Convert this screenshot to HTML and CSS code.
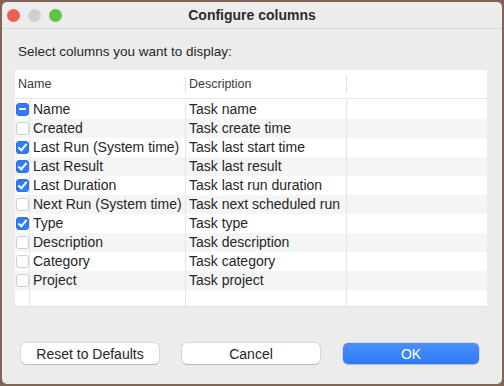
FILE: index.html
```html
<!DOCTYPE html>
<html lang="en">
<head>
  <meta charset="UTF-8" />
  <title>Configure columns</title>
  <link rel="stylesheet" href="styles.css">
</head>
<body>

  <div class="window">
    <!-- Title bar -->
    <div class="titlebar">
      <div class="lights">
        <span class="light red"></span>
        <span class="light gray"></span>
        <span class="light green"></span>
      </div>
      <div class="title">Configure columns</div>
      <div></div>
    </div>

    <div class="content">
      <p class="hint">Select columns you want to display:</p>

      <div class="table">
        <div class="row head">
          <div class="cell name-head">Name</div>
          <div class="cell desc">Description</div>
          <div class="cell last"></div>
        </div>

        <div class="row">
          <div class="cell check"><span class="box mixed"></span></div>
          <div class="cell name">Name</div>
          <div class="cell desc">Task name</div>
          <div class="cell last"></div>
        </div>
        <div class="row alt">
          <div class="cell check"><span class="box"></span></div>
          <div class="cell name">Created</div>
          <div class="cell desc">Task create time</div>
          <div class="cell last"></div>
        </div>
        <div class="row">
          <div class="cell check"><span class="box on"></span></div>
          <div class="cell name">Last Run (System time)</div>
          <div class="cell desc">Task last start time</div>
          <div class="cell last"></div>
        </div>
        <div class="row alt">
          <div class="cell check"><span class="box on"></span></div>
          <div class="cell name">Last Result</div>
          <div class="cell desc">Task last result</div>
          <div class="cell last"></div>
        </div>
        <div class="row">
          <div class="cell check"><span class="box on"></span></div>
          <div class="cell name">Last Duration</div>
          <div class="cell desc">Task last run duration</div>
          <div class="cell last"></div>
        </div>
        <div class="row alt">
          <div class="cell check"><span class="box"></span></div>
          <div class="cell name">Next Run (System time)</div>
          <div class="cell desc">Task next scheduled run</div>
          <div class="cell last"></div>
        </div>
        <div class="row">
          <div class="cell check"><span class="box on"></span></div>
          <div class="cell name">Type</div>
          <div class="cell desc">Task type</div>
          <div class="cell last"></div>
        </div>
        <div class="row alt">
          <div class="cell check"><span class="box"></span></div>
          <div class="cell name">Description</div>
          <div class="cell desc">Task description</div>
          <div class="cell last"></div>
        </div>
        <div class="row">
          <div class="cell check"><span class="box"></span></div>
          <div class="cell name">Category</div>
          <div class="cell desc">Task category</div>
          <div class="cell last"></div>
        </div>
        <div class="row alt">
          <div class="cell check"><span class="box"></span></div>
          <div class="cell name">Project</div>
          <div class="cell desc">Task project</div>
          <div class="cell last"></div>
        </div>
        <div class="row filler">
          <div class="cell check"></div>
          <div class="cell name"></div>
          <div class="cell desc"></div>
          <div class="cell last"></div>
        </div>
      </div>

      <div class="buttons">
        <button class="btn" type="button">Reset to Defaults</button>
        <button class="btn" type="button">Cancel</button>
        <button class="btn primary" type="button">OK</button>
      </div>
    </div>
  </div>

</body>
</html>
```

FILE: styles.css
```css
body {
  margin: 0;
  background-color: #7f6556;
  font-family: 'Liberation Sans', Arial, sans-serif;
  font-size: 14px;
  color: #262626;
}
.window {
  margin: 2px;
  height: 382px;
  background-color: #ececec;
  border-radius: 5px;
  overflow: hidden;
}
.titlebar {
  height: 26px;
  border-bottom: 1px solid #d9d9d9;
  display: grid;
  grid-template-columns: 1fr auto 1fr;
  align-items: center;
  padding: 0 5px;
}
.lights {
  display: flex;
  gap: 8px;
}
.light {
  width: 13px;
  height: 13px;
  border-radius: 50%;
}
.red { background-color: #ed5f57; }
.gray { background-color: #d0d0d0; }
.green { background-color: #5ec544; }
.title {
  font-weight: bold;
  font-size: 14px;
  color: #2b2b2b;
}
.content {
  padding: 0 15px 0 13px;
}
.hint {
  margin: 15px 0 11px 3px;
  line-height: 15px;
  font-size: 13.5px;
}
.table {
  background-color: #fff;
  width: 472px;
  height: 236px;
  border-bottom: 1px solid #e2e2e2;
}
.row {
  display: grid;
  grid-template-columns: 15px 156px 161px 1fr;
  height: 19px;
  line-height: 19px;
}
.row.alt {
  background-color: #f4f5f5;
}
.row.filler {
  height: 17px;
}
.cell {
  border-right: 1px solid #e4e4e4;
  padding-left: 3px;
  white-space: nowrap;
  overflow: hidden;
}
.cell.last {
  border-right: none;
}
.cell.check {
  padding-left: 1px;
  display: flex;
  align-items: center;
}
.row.head {
  grid-template-columns: 171px 161px 1fr;
  height: 28px;
  line-height: 28px;
  font-size: 12.5px;
  color: #3a3a3a;
  border-bottom: 1px solid #e4e4e4;
  margin-bottom: 1px;
}
.row.head .cell {
  border-right: none;
}
.row.head .name-head,
.row.head .desc {
  background: linear-gradient(#e2e2e2, #e2e2e2) right 6px / 1px 17px no-repeat;
}
.box {
  width: 11px;
  height: 11px;
  border: 1px solid #cfcfcf;
  border-radius: 3px;
  background-color: #fff;
  position: relative;
}
.box.on,
.box.mixed {
  background-color: #2f7cf6;
  border-color: #2a72e6;
}
.box.on::after {
  content: "";
  position: absolute;
  left: 3px;
  top: 0px;
  width: 3px;
  height: 7px;
  border: solid #fff;
  border-width: 0 2px 2px 0;
  transform: rotate(40deg);
}
.box.mixed::after {
  content: "";
  position: absolute;
  left: 2px;
  top: 4px;
  width: 7px;
  height: 2px;
  background-color: #fff;
  border-radius: 1px;
}
.buttons {
  display: flex;
  margin-top: 36px;
  padding-left: 6px;
}
.btn {
  font-family: inherit;
  font-size: 14px;
  height: 21px;
  width: 138px;
  border: none;
  border-radius: 5px;
  background-color: #fff;
  color: #262626;
  box-shadow: 0 0 0 0.5px rgba(0,0,0,0.15), 0 1px 1px rgba(0,0,0,0.15);
  padding: 0;
  margin-right: 23px;
}
.btn.primary {
  width: 136px;
  margin-right: 0;
  background: linear-gradient(#4a90f8, #2d7af5);
  color: #fff;
}
```
